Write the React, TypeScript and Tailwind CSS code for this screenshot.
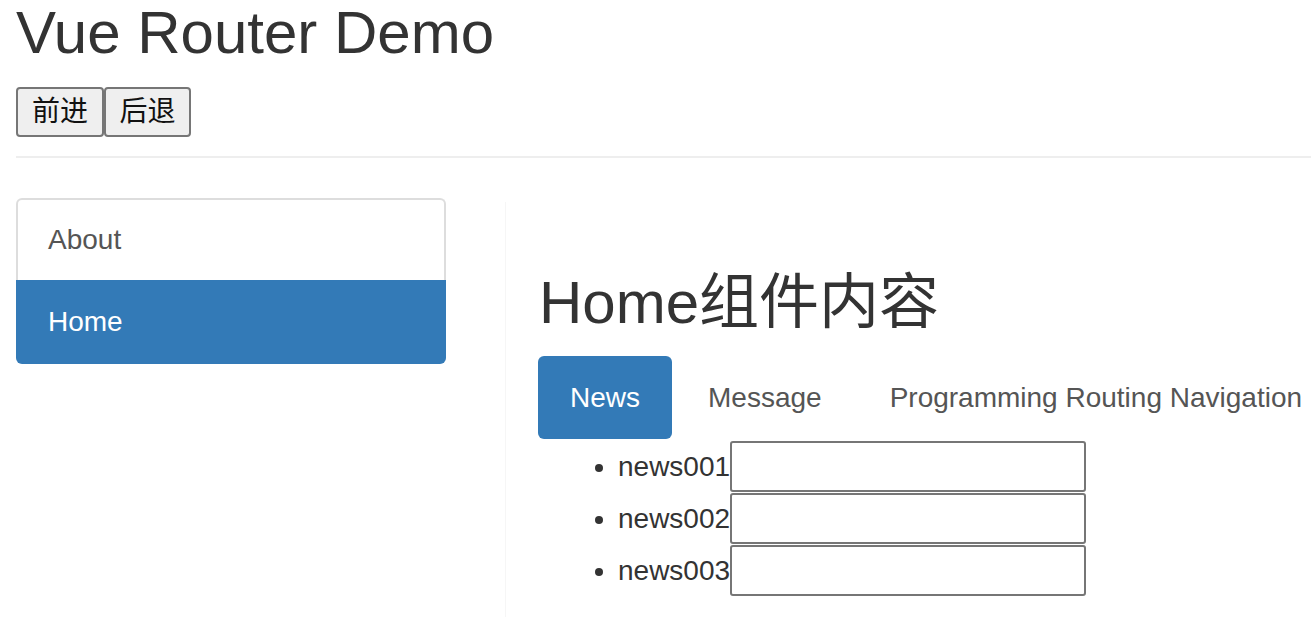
import React from 'react';

const news = ['news001', 'news002', 'news003'];

export default function App() {
  return (
    <div className="min-h-screen bg-white text-[#333] font-['Liberation_Sans','Noto_Sans_CJK_SC',sans-serif] overflow-hidden">
      {/* Page header */}
      <div className="pl-4">
        <h1 className="text-[60px] leading-[66px] font-normal">Vue Router Demo</h1>
        <div className="flex mt-[21px]">
          <button className="w-[88px] h-[50px] bg-[#efefef] border-2 border-[#767676] rounded-[4px] text-[28px] leading-none text-[#111]">
            前进
          </button>
          <button className="w-[87px] h-[50px] bg-[#efefef] border-2 border-[#767676] rounded-[4px] text-[28px] leading-none text-[#111]">
            后退
          </button>
        </div>
        <div className="mt-[19px] h-[2px] bg-[#eeeeee]" />
      </div>

      <div className="flex mt-[40px]">
        {/* Sidebar */}
        <div className="ml-4 w-[430px] shrink-0 text-[28px]">
          <a className="flex items-center h-[82px] pl-[30px] border-2 border-b-0 border-[#dddddd] rounded-t-[6px] text-[#555]">
            About
          </a>
          <a className="flex items-center h-[84px] pl-[32px] bg-[#337ab7] rounded-b-[6px] text-white">
            Home
          </a>
        </div>

        {/* Content */}
        <div className="ml-[59px] mt-[4px] flex-1 border-l border-[#f6f6f6] pl-[33px] pt-[68px] pb-10">
          <h2 className="text-[60px] leading-[66px] font-normal">Home组件内容</h2>
          <ul className="flex gap-[4px] mt-[20px] -ml-[1px] text-[28px]">
            <li>
              <a className="flex items-center h-[83px] px-[32px] bg-[#337ab7] text-white rounded-[6px]">News</a>
            </li>
            <li>
              <a className="flex items-center h-[83px] px-[32px] text-[#555]">Message</a>
            </li>
            <li>
              <a className="flex items-center h-[83px] px-[32px] text-[#555] whitespace-nowrap">
                Programming Routing Navigation
              </a>
            </li>
          </ul>
          <ul className="list-disc pl-[79px] mt-[2px] text-[28px]">
            {news.map((n) => (
              <li key={n} className="mb-[1px]">
                <div className="flex items-center">
                  <span>{n}</span>
                  <input
                    type="text"
                    className="w-[356px] h-[51px] border-2 border-[#767676] rounded-[3px] bg-white"
                  />
                </div>
              </li>
            ))}
          </ul>
        </div>
      </div>
    </div>
  );
}
